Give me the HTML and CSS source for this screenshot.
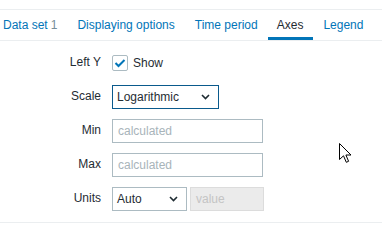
FILE: index.html
```html
<!DOCTYPE html>
<html>
<head>
<meta charset="utf-8">
<link rel="stylesheet" href="styles.css">
</head>
<body>
<div class="panel">
  <nav class="tabs">
    <a class="tab first">Data set <span class="count">1</span></a>
    <a class="tab">Displaying options</a>
    <a class="tab">Time period</a>
    <a class="tab active">Axes</a>
    <a class="tab">Legend</a>
  </nav>
  <div class="form">
    <div class="label">Left Y</div>
    <div class="field">
      <span class="checkbox">
        <svg width="12" height="10" viewBox="0 0 12 10"><path d="M1.5 5 L4.5 8 L10.5 2" fill="none" stroke="#0275b8" stroke-width="2"/></svg>
      </span>
      <span class="check-label">Show</span>
    </div>

    <div class="label">Scale</div>
    <div class="field">
      <div class="select focused scale"><span>Logarithmic</span><svg class="chev" width="9" height="6" viewBox="0 0 9 6"><path d="M1 1 L4.5 4.5 L8 1" fill="none" stroke="#1f2c33" stroke-width="1.6"/></svg></div>
    </div>

    <div class="label">Min</div>
    <div class="field"><div class="input wide placeholder">calculated</div></div>

    <div class="label">Max</div>
    <div class="field"><div class="input wide placeholder">calculated</div></div>

    <div class="label">Units</div>
    <div class="field units">
      <div class="select small"><span>Auto</span><svg class="chev" width="9" height="6" viewBox="0 0 9 6"><path d="M1 1 L4.5 4.5 L8 1" fill="none" stroke="#1f2c33" stroke-width="1.6"/></svg></div>
      <div class="input disabled">value</div>
    </div>
  </div>
  <div class="bottom-line"></div>
</div>
<svg class="cursor" width="14" height="22" viewBox="0 0 14 22"><path d="M0.5 0.5 L0.5 16.5 L4.5 12.8 L7.3 19.3 L9.6 18.3 L6.9 12 L12 12 Z" fill="#fff" stroke="#000" stroke-width="1" stroke-linejoin="miter"/></svg>
</body>
</html>
```
FILE: styles.css
```css
html, body {
  margin: 0;
  padding: 0;
  background: #ffffff;
}
body {
  font-family: "Liberation Sans", Arial, sans-serif;
  font-size: 12px;
  color: #1f2c33;
  position: relative;
  width: 382px;
  height: 241px;
  overflow: hidden;
}
.panel {
  padding-top: 9px;
}
.tabs {
  display: flex;
  border-top: 1px solid #ebeef0;
  border-bottom: 1px solid #ebeef0;
  height: 30px;
}
.tab {
  display: flex;
  align-items: center;
  padding: 0 10px;
  color: #0275b8;
  white-space: nowrap;
  box-sizing: border-box;
  height: 30px;
  border-bottom: 3px solid transparent;
  padding-top: 2px;
}
.tab.first {
  padding-left: 3px;
  padding-right: 10px;
}
.tab.active {
  color: #1f2c33;
  border-bottom-color: #0275b8;
  padding-left: 9px;
}
.count {
  color: #768d99;
  margin-left: 3px;
}
.form {
  display: grid;
  grid-template-columns: 101px auto;
  column-gap: 11px;
  row-gap: 10px;
  padding-top: 10px;
  padding-bottom: 11px;
}
.label {
  text-align: right;
  height: 24px;
  line-height: 23px;
}
.field {
  display: flex;
  align-items: center;
  height: 24px;
}
.checkbox {
  width: 16px;
  height: 16px;
  box-sizing: border-box;
  border: 1px solid #acbbc2;
  border-radius: 2px;
  display: flex;
  align-items: center;
  justify-content: center;
}
.check-label {
  margin-left: 5px;
  line-height: 23px;
}
.select {
  box-sizing: border-box;
  height: 24px;
  border: 1px solid #acbbc2;
  display: flex;
  align-items: center;
  justify-content: space-between;
  padding: 0 8px 0 4px;
}
.select.focused {
  border-color: #0a5a8c;
}
.scale {
  width: 107px;
}
.small {
  width: 75px;
}
.chev {
  display: block;
}
.input {
  box-sizing: border-box;
  height: 24px;
  border: 1px solid #acbbc2;
  display: flex;
  align-items: center;
  padding: 0 5px;
}
.wide {
  width: 151px;
}
.placeholder {
  color: #a8b4ba;
}
.units {
  gap: 3px;
}
.disabled {
  width: 74px;
  background: #ebebeb;
  border-color: #dcdcdc;
  color: #c4c4c4;
}
.bottom-line {
  border-top: 1px solid #ebeef0;
}
.cursor {
  position: absolute;
  left: 339px;
  top: 143px;
}
```
